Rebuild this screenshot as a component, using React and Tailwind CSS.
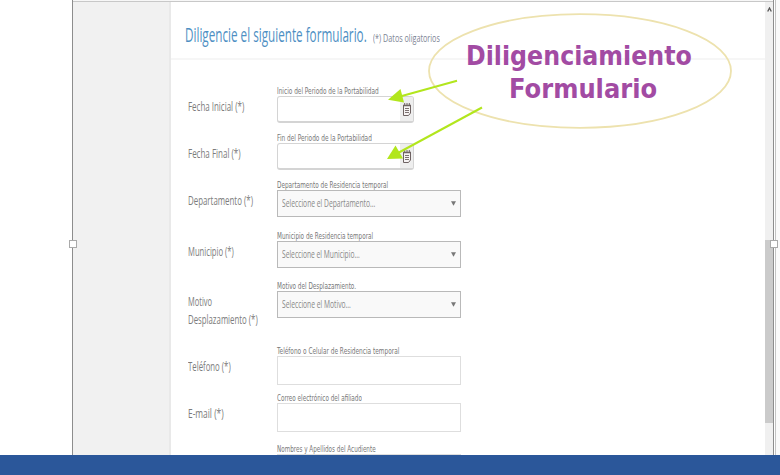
import { useLayoutEffect, useRef, useState } from "react";

// Single line of text condensed or widened to a given width.
function Fit({ width, className = "", children }) {
  const ref = useRef(null);
  const [scale, setScale] = useState(1);
  useLayoutEffect(() => {
    const measure = () => {
      if (ref.current) setScale(width / ref.current.offsetWidth);
    };
    measure();
    document.fonts?.ready.then(measure);
  }, [width, children]);
  return (
    <span className={`block whitespace-nowrap ${className}`} style={{ width }}>
      <span
        ref={ref}
        className="inline-block origin-left align-top"
        style={{ transform: `scaleX(${scale})` }}
      >
        {children}
      </span>
    </span>
  );
}

function CalendarIcon() {
  return (
    <svg width="8" height="13" viewBox="0 0 8 13" fill="none" stroke="#6e6262">
      <path d="M.5 2.5h7v7.5L5.5 12.5h-5z" fill="#f6f3f3" />
      <path d="M0 2.5h8" strokeWidth="1.6" />
      <path d="M1.7 0v2M4 0v2M6.3 0v2" strokeWidth="1" />
      <path d="M2 5.5h4M2 7.5h4M2 9.5h4" strokeWidth="0.9" />
    </svg>
  );
}

function DateBox() {
  return (
    <div className="flex h-[27px] w-[137px] overflow-hidden rounded-[3px] border border-b-2 border-[#d4d4d4] bg-white">
      <div className="flex-1" />
      <div className="flex w-[13px] items-center justify-center bg-[#eeeeee]">
        <CalendarIcon />
      </div>
    </div>
  );
}

function SelectBox({ text, width }) {
  return (
    <div className="flex h-[27px] w-[184px] items-center justify-between border border-[#b9b9b9] bg-[#f9f9f9] pr-[4px] pl-[4px]">
      <Fit width={width} className="pb-px text-[11.5px] leading-[16px] text-[#888]">
        {text}
      </Fit>
      <svg width="5" height="5" viewBox="0 0 5 5">
        <path d="M0 .3h5L2.5 4.7z" fill="#777" />
      </svg>
    </div>
  );
}

function TextBox() {
  return <div className="h-[29px] w-[184px] border border-[#dedede] bg-white" />;
}

const rows = [
  { height: "h-[47px]", labels: [["Fecha Inicial (*)", 56]], hint: "Inicio del Periodo de la Portabilidad", hintWidth: 102, kind: "date" },
  { height: "h-[47px]", labels: [["Fecha Final (*)", 52.5]], hint: "Fin del Periodo de la Portabilidad", hintWidth: 95, kind: "date" },
  { height: "h-[51px]", labels: [["Departamento (*)", 65]], hint: "Departamento de Residencia temporal", hintWidth: 111, kind: "select", text: "Seleccione el Departamento...", textWidth: 93 },
  { height: "h-[50px]", labels: [["Municipio (*)", 46]], hint: "Municipio de Residencia temporal", hintWidth: 96, kind: "select", text: "Seleccione el Municipio...", textWidth: 78 },
  { height: "h-[65px]", labels: [["Motivo", 24], ["Desplazamiento (*)", 70]], hint: "Motivo del Desplazamiento.", hintWidth: 79, kind: "select", text: "Seleccione el Motivo...", textWidth: 69 },
  { height: "h-[47px]", labels: [["Teléfono (*)", 43]], hint: "Teléfono o Celular de Residencia temporal", hintWidth: 122, kind: "text" },
  { height: "h-[51px]", labels: [["E-mail (*)", 35.5]], hint: "Correo electrónico del afiliado", hintWidth: 85, kind: "text" },
  { height: "h-[51px]", labels: [], hint: "Nombres y Apellidos del Acudiente", hintWidth: 99, kind: "text" },
];

function Row({ row }) {
  return (
    <div className={`flex shrink-0 ${row.height}`}>
      <div className="w-[89px] pt-[13px]">
        {row.labels.map(([text, width]) => (
          <Fit key={text} width={width} className="text-[12.5px] leading-[18px] text-[#7c7c7c]">
            {text}
          </Fit>
        ))}
      </div>
      <div>
        <Fit
          width={row.hintWidth}
          className="h-[11px] font-['DejaVu_Sans',sans-serif] text-[8px] leading-[13px] text-[#777]"
        >
          {row.hint}
        </Fit>
        {row.kind === "date" && <DateBox />}
        {row.kind === "select" && <SelectBox text={row.text} width={row.textWidth} />}
        {row.kind === "text" && <TextBox />}
      </div>
    </div>
  );
}

function Callout() {
  return (
    <div className="absolute top-0 left-0 h-[200px] w-[780px]">
      <svg width="780" height="200" viewBox="0 0 780 200" className="absolute inset-0">
        <ellipse cx="580" cy="71" rx="151" ry="56.8" fill="none" stroke="#ede2ae" strokeWidth="1.8" />
        <g stroke="#b2e61d" strokeWidth="2" fill="none">
          <path d="M457 80.7L400 96.5" />
          <path d="M482 107.5L398 153" />
        </g>
        <path d="M388 99.7L400.5 89L404 102.5z" fill="#b2e61d" />
        <path d="M387 159L395.5 145.5L403 158.5z" fill="#b2e61d" />
      </svg>
      <div className="absolute top-[39px] left-[466px] w-[226px] font-['DejaVu_Sans',sans-serif] text-[27px] leading-[33px] font-bold text-[#a24ba3]">
        <Fit width={226}>Diligenciamiento</Fit>
        <Fit width={148} className="ml-[43px]">
          Formulario
        </Fit>
      </div>
    </div>
  );
}

export default function App() {
  return (
    <div className="relative flex h-[475px] w-[780px] flex-col overflow-hidden bg-white font-['Open_Sans',sans-serif]">
      <div className="flex h-[455px] shrink-0">
        <div className="w-[72px] shrink-0" />
        <div className="flex w-[702px] shrink-0 flex-col border-x border-[#8d8d8d]">
          <div className="h-[2px] shrink-0 border-b border-[#c8c8c8] bg-[#f7f7f7]" />
          <div className="flex min-h-0 flex-1">
            <aside className="w-[98px] shrink-0 border-r-2 border-[#e9e9e9] bg-[#f1f1f1]" />
            <main className="flex min-w-0 flex-1 flex-col overflow-hidden">
              <header className="flex h-[58px] shrink-0 border-b-2 border-[#f6f6f6] pt-[17px] pl-[14px]">
                <Fit width={182} className="text-[20.5px] leading-[30px] text-[#4e8fc3]">
                  Diligencie el siguiente formulario.
                </Fit>
                <Fit width={67} className="ml-[6px] pt-[10px] text-[11.5px] leading-[18px] text-[#7d8494]">
                  (*) Datos oligatorios
                </Fit>
              </header>
              <div className="flex flex-col pt-[25px] pl-[17px]">
                {rows.map((row) => (
                  <Row key={row.hint} row={row} />
                ))}
              </div>
            </main>
            <div className="flex w-[8px] shrink-0 flex-col bg-[#f0f0f0]">
              <div className="flex h-[238px] shrink-0 justify-center pt-[5px]">
                <svg width="5" height="5" viewBox="0 0 5 5">
                  <path d="M.7 4.5L2.5 1l1.8 3.5" fill="none" stroke="#555" strokeWidth="1.3" />
                </svg>
              </div>
              <div className="h-[183px] shrink-0 bg-[#cbcbcb]" />
            </div>
          </div>
        </div>
        <div className="ml-px flex-1 border-l border-[#c4c4c4] bg-[#fafafa]" />
      </div>
      <footer className="h-[20px] shrink-0 bg-[#2b579a]" />
      <Callout />
      <div className="absolute top-[240px] left-[69px] size-[8px] border border-[#aaa] bg-white" />
      <div className="absolute top-[240px] left-[770px] size-[8px] border border-[#aaa] bg-white" />
    </div>
  );
}
